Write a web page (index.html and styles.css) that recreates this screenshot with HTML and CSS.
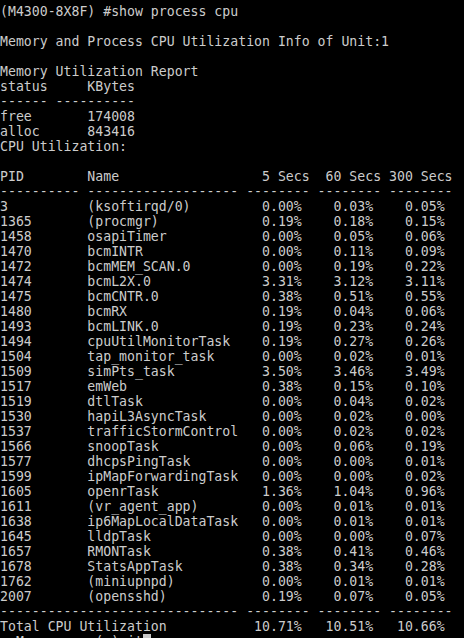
FILE: index.html
```html
<!DOCTYPE html>
<html>
<head>
<meta charset="utf-8">
<link rel="stylesheet" href="styles.css">
</head>
<body>
<pre class="term">(M4300-8X8F) #show process cpu

Memory and Process CPU Utilization Info of Unit:1

Memory Utilization Report
status     KBytes
------ ----------
free       174008
alloc      843416
CPU Utilization:

PID        Name                  5 Secs  60 Secs 300 Secs
---------- ------------------- -------- -------- --------
3          (ksoftirqd/0)         0.00%    0.03%    0.05%
1365       (procmgr)             0.19%    0.18%    0.15%
1458       osapiTimer            0.00%    0.05%    0.06%
1470       bcmINTR               0.00%    0.11%    0.09%
1472       bcmMEM_SCAN.0         0.00%    0.19%    0.22%
1474       bcmL2X.0              3.31%    3.12%    3.11%
1475       bcmCNTR.0             0.38%    0.51%    0.55%
1480       bcmRX                 0.19%    0.04%    0.06%
1493       bcmLINK.0             0.19%    0.23%    0.24%
1494       cpuUtilMonitorTask    0.19%    0.27%    0.26%
1504       tap_monitor_task      0.00%    0.02%    0.01%
1509       simPts_task           3.50%    3.46%    3.49%
1517       emWeb                 0.38%    0.15%    0.10%
1519       dtlTask               0.00%    0.04%    0.02%
1530       hapiL3AsyncTask       0.00%    0.02%    0.00%
1537       trafficStormControl   0.00%    0.02%    0.02%
1566       snoopTask             0.00%    0.06%    0.19%
1577       dhcpsPingTask         0.00%    0.00%    0.01%
1599       ipMapForwardingTask   0.00%    0.00%    0.02%
1605       openrTask             1.36%    1.04%    0.96%
1611       (vr_agent_app)        0.00%    0.01%    0.01%
1638       ip6MapLocalDataTask   0.00%    0.01%    0.01%
1645       lldpTask              0.00%    0.00%    0.07%
1657       RMONTask              0.38%    0.41%    0.46%
1678       StatsAppTask          0.38%    0.34%    0.28%
1762       (miniupnpd)           0.00%    0.01%    0.01%
2007       (opensshd)            0.19%    0.07%    0.05%
------------------------------ -------- -------- --------
Total CPU Utilization           10.71%   10.51%   10.66%
--More-- or (q)uit<span class="cursor"> </span></pre>
</body>
</html>
```

FILE: styles.css
```css
html, body {
  margin: 0;
  padding: 0;
  background: #000;
}

body {
  width: 464px;
  height: 638px;
  overflow: hidden;
}

.term {
  margin: 0;
  padding: 4px 0 0 0;
  font-family: "DejaVu Sans Mono", monospace;
  font-size: 13.2px;
  line-height: 15px;
  color: #cccccc;
  white-space: pre;
}

.cursor {
  background: #c8c8c8;
}
```
